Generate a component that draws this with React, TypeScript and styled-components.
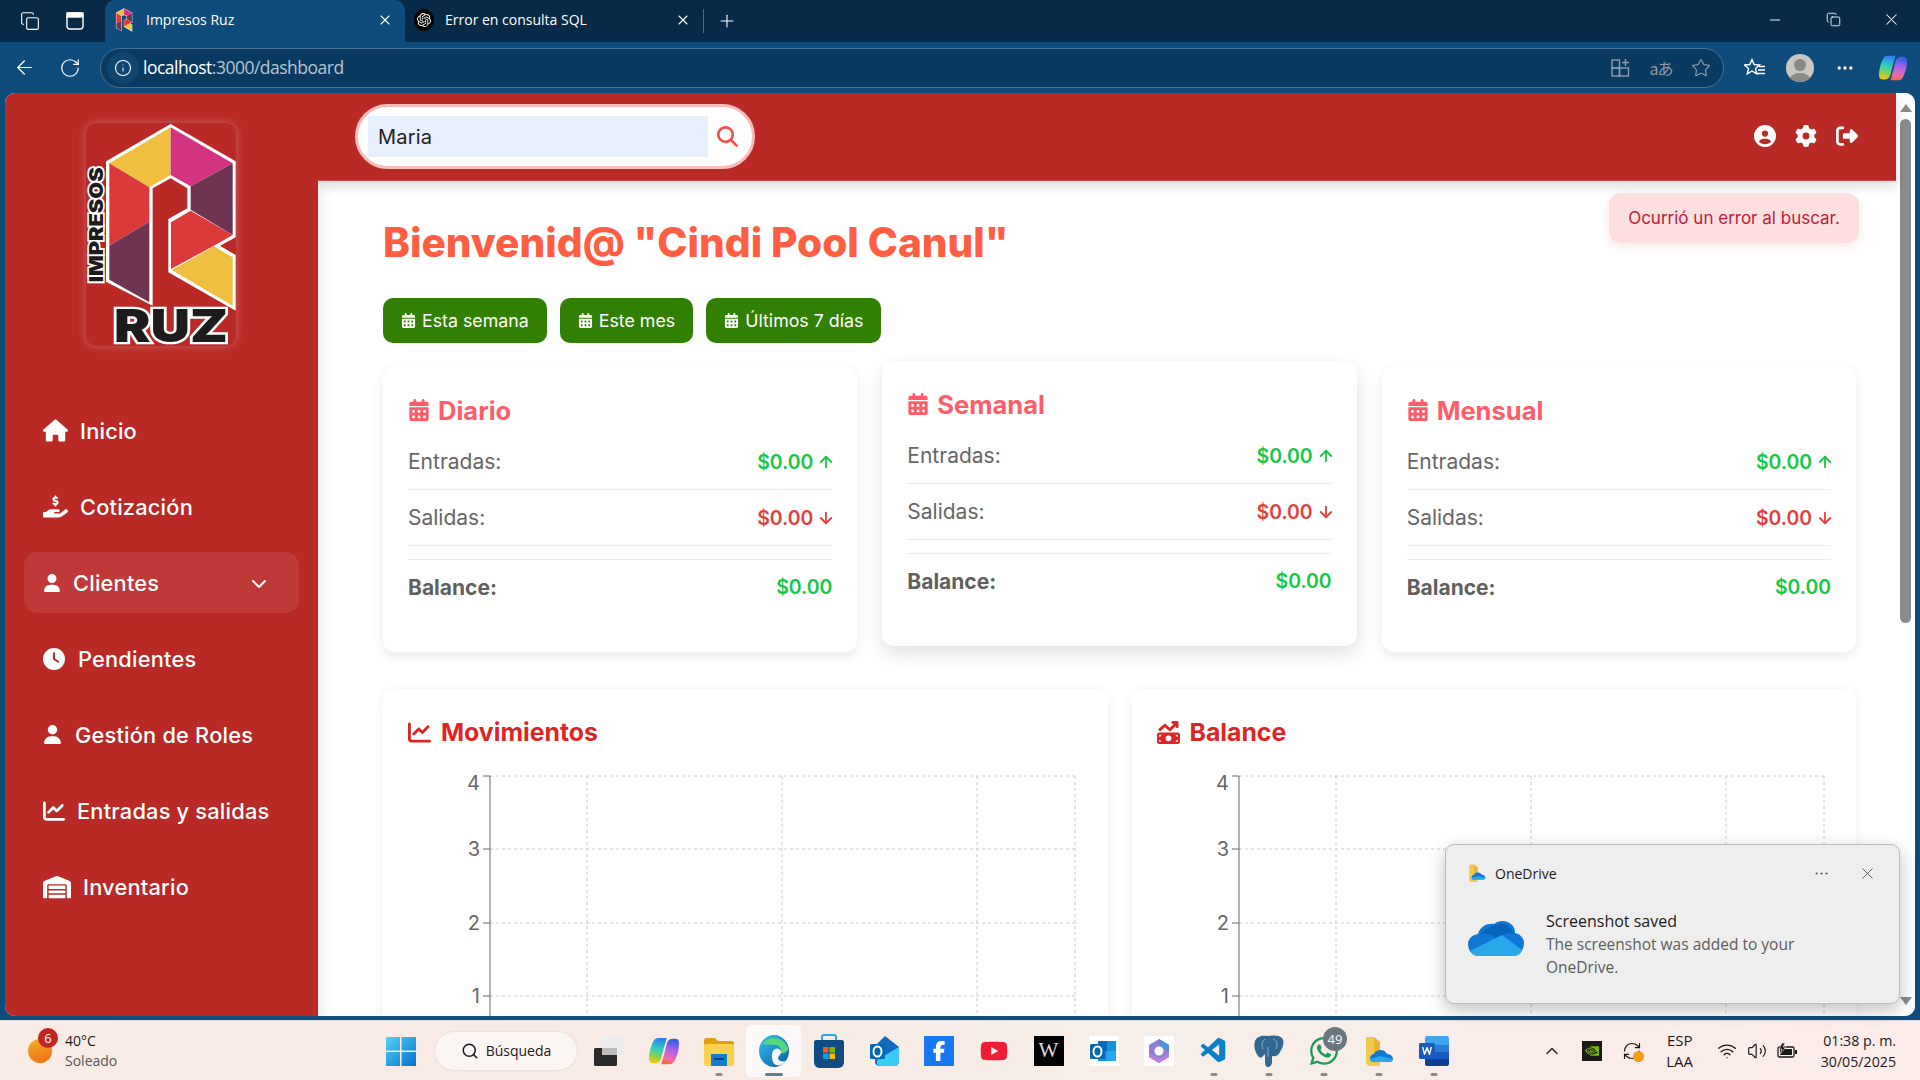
import React from "react";
import styled, { createGlobalStyle } from "styled-components";
import {
  FaHouse,
  FaHandHoldingDollar,
  FaUser,
  FaClock,
  FaChartLine,
  FaWarehouse,
  FaChevronDown,
  FaCalendarDays,
  FaCircleUser,
  FaGear,
  FaRightFromBracket,
  FaMagnifyingGlass,
  FaMoneyBillTrendUp,
  FaFacebookF,
  FaYoutube,
  FaWhatsapp,
} from "react-icons/fa6";
import { SiOpenai, SiNvidia } from "react-icons/si";
import { VscVscode } from "react-icons/vsc";
import {
  ArrowLeft,
  ArrowUp,
  ArrowDown,
  RotateCw,
  Info,
  Star,
  Plus,
  X,
  Minus,
  Copy,
  MoreHorizontal,
  Search,
  ChevronUp,
  Wifi,
  Volume2,
  RefreshCw,
} from "lucide-react";

const GlobalStyle = createGlobalStyle`
  html, body {
    margin: 0;
    padding: 0;
    height: 100%;
    overflow: hidden;
    background: #0f4c7c;
  }
  * { box-sizing: border-box; }
`;

const UI_FONT = `"Open Sans", "Noto Sans", sans-serif`;
const PAGE_FONT = `Inter, "Noto Sans", sans-serif`;

const Screen = styled.div`
  position: relative;
  width: 1920px;
  height: 1080px;
  display: flex;
  flex-direction: column;
  overflow: hidden;
  background: #0f4c7c;
  font-family: ${PAGE_FONT};
`;

/* browser chrome */
const TabStrip = styled.div`
  height: 42px;
  flex: none;
  display: flex;
  background: #072a48;
  color: #fff;
  font-family: ${UI_FONT};
`;

const StripButton = styled.div`
  width: 45px;
  display: flex;
  align-items: center;
  justify-content: center;
  flex: none;
`;

const StripLeft = styled.div`
  display: flex;
  width: 105px;
  padding-left: 7px;
  flex: none;
`;

const Tab = styled.div<{ $active?: boolean }>`
  width: ${(p) => (p.$active ? "300px" : "298px")};
  display: flex;
  align-items: center;
  gap: 11px;
  padding: 0 12px 3px 8px;
  border-radius: 10px 10px 0 0;
  background: ${(p) => (p.$active ? "#0f4c7c" : "transparent")};
  font-size: 14px;
  flex: none;
`;

const TabTitle = styled.span`
  flex: 1;
  white-space: nowrap;
`;

const TabDivider = styled.div`
  width: 1px;
  height: 24px;
  margin-top: 9px;
  background: #4c6a83;
  flex: none;
`;

const WindowControls = styled.div`
  margin-left: auto;
  display: flex;
  width: 174px;
  flex: none;
`;

const WindowButton = styled.div`
  width: 58px;
  display: flex;
  align-items: center;
  justify-content: center;
  padding-bottom: 3px;
`;

const Toolbar = styled.div`
  height: 51px;
  flex: none;
  display: flex;
  align-items: center;
  background: #0f4c7c;
  color: #fff;
  font-family: ${UI_FONT};
`;

const ToolButton = styled.div<{ $w?: number }>`
  width: ${(p) => p.$w ?? 45}px;
  display: flex;
  align-items: center;
  justify-content: center;
  flex: none;
`;

const AddressBar = styled.div`
  width: 1624px;
  height: 40px;
  margin-left: 8px;
  padding: 0 2px 0 6px;
  display: flex;
  align-items: center;
  flex: none;
  background: #0a3a60;
  border: 1px solid #4a7291;
  border-radius: 20px;
`;

const SiteInfo = styled.div`
  width: 32px;
  height: 32px;
  margin-right: 4px;
  border-radius: 50%;
  background: #11456e;
  display: flex;
  align-items: center;
  justify-content: center;
  flex: none;
`;

const Url = styled.div`
  flex: 1;
  padding-bottom: 2px;
  font-size: 17.5px;
  letter-spacing: -0.5px;
  color: #fff;
`;

const UrlRest = styled.span`
  color: #b5c5d3;
`;

const AddressIcon = styled.div`
  width: 40px;
  display: flex;
  justify-content: center;
  color: #8d9dab;
`;

const TranslateGlyph = styled.span`
  font-family: "Noto Sans CJK JP", "Noto Sans", sans-serif;
  font-size: 16px;
  letter-spacing: -1px;
`;

const Avatar = styled.div`
  position: relative;
  width: 28px;
  height: 28px;
  border-radius: 50%;
  overflow: hidden;
  background: #c9c7c3;
  display: flex;
  justify-content: center;
`;

const AvatarHead = styled.div`
  width: 12px;
  height: 12px;
  margin-top: 5px;
  border-radius: 50%;
  background: #8b8985;
`;

const AvatarBody = styled.div`
  position: absolute;
  bottom: -7px;
  width: 22px;
  height: 16px;
  border-radius: 50%;
  background: #8b8985;
`;

/* page */
const PageRow = styled.div`
  height: 923px;
  flex: none;
  margin: 0 5px 0 5px;
  display: flex;
  border-radius: 10px;
  overflow: hidden;
  background: #fff;
`;

const Sidebar = styled.aside`
  width: 313px;
  flex: none;
  display: flex;
  flex-direction: column;
  background: #b92926;
  color: #fff;
  padding: 30px 19px 0;
  z-index: 2;
`;

const LogoTile = styled.div`
  width: 150px;
  height: 223px;
  margin-left: 62px;
  border-radius: 10px;
  box-shadow: 0 0 10px rgba(255, 255, 255, 0.28);
  flex: none;
  svg {
    display: block;
    margin-left: -10px;
  }
`;

const Nav = styled.nav`
  margin-top: 54px;
  display: flex;
  flex-direction: column;
  gap: 15px;
`;

const NavItem = styled.div<{ $open?: boolean; $gap: number }>`
  height: 61px;
  display: flex;
  align-items: center;
  gap: ${(p) => p.$gap}px;
  padding: 0 32px 0 19px;
  border-radius: 14px;
  background: ${(p) => (p.$open ? "rgba(255,255,255,0.08)" : "transparent")};
  font-size: 21.8px;
  font-weight: 500;
  letter-spacing: 0.2px;
  svg { flex: none; }
`;

const NavLabel = styled.span`
  flex: 1;
  white-space: nowrap;
`;

const Content = styled.div`
  position: relative;
  flex: 1;
  min-width: 0;
  display: flex;
  flex-direction: column;
  box-shadow: inset 14px 0 14px -12px rgba(0, 0, 0, 0.1);
`;

const TopBar = styled.header`
  height: 88px;
  flex: none;
  display: flex;
  align-items: center;
  justify-content: space-between;
  padding: 0 38px 0 37px;
  background: #b92926;
  border-bottom: 1px solid #cf4a48;
  box-shadow: 0 4px 12px rgba(0, 0, 0, 0.16);
  z-index: 1;
`;

const SearchPill = styled.div`
  width: 400px;
  height: 65px;
  display: flex;
  align-items: center;
  gap: 9px;
  padding: 0 14px 0 10px;
  background: #fff;
  border: 3px solid #f8bdbb;
  border-radius: 33px;
`;

const SearchInput = styled.div`
  flex: 1;
  height: 41px;
  padding: 0 10px;
  display: flex;
  align-items: center;
  background: #e8f0fe;
  color: #222;
  font-size: 20px;
  letter-spacing: 0.2px;
`;

const TopIcons = styled.div`
  display: flex;
  align-items: center;
  gap: 19px;
  padding-bottom: 2px;
  color: #fff;
  font-size: 22px;
`;

const Toast = styled.div`
  position: absolute;
  top: 100px;
  right: 37px;
  width: 250px;
  height: 50px;
  display: flex;
  align-items: center;
  justify-content: center;
  border-radius: 12px;
  background: #fddfe0;
  color: #b91c3c;
  font-size: 17px;
  box-shadow: 0 4px 12px rgba(220, 38, 38, 0.1);
  z-index: 3;
`;

const Main = styled.main`
  flex: 1;
  min-height: 0;
  overflow: hidden;
  padding: 34px 40px 0 65px;
`;

const Title = styled.h1`
  margin: 0;
  height: 56px;
  line-height: 56px;
  font-size: 40.6px;
  font-weight: 800;
  color: #ff5e42;
  white-space: nowrap;
`;

const Filters = styled.div`
  margin-top: 27px;
  display: flex;
  gap: 13px;
`;

const FilterButton = styled.div`
  height: 45px;
  padding: 0 18px;
  display: flex;
  align-items: center;
  gap: 6px;
  border-radius: 10px;
  background: #317f03;
  color: #fff;
  font-size: 17.8px;
`;

const Summary = styled.div`
  margin-top: 24px;
  display: grid;
  grid-template-columns: repeat(3, 1fr);
  gap: 25px;
`;

const Card = styled.section<{ $raised?: boolean }>`
  height: 285px;
  padding: 23px 25px 0;
  border-radius: 12px;
  background: #fff;
  transform: ${(p) => (p.$raised ? "translateY(-6px)" : "none")};
  box-shadow: ${(p) =>
    p.$raised ? "0 8px 22px rgba(0,0,0,0.12)" : "0 4px 14px rgba(0,0,0,0.09)"};
`;

const CardTitle = styled.h3`
  margin: 0;
  height: 44px;
  padding-bottom: 4px;
  display: flex;
  align-items: center;
  gap: 8px;
  font-size: 25.5px;
  font-weight: 700;
  color: #ff5c6a;
`;

const Row = styled.div`
  height: 56px;
  display: flex;
  align-items: center;
  justify-content: space-between;
  border-bottom: 1px solid #ececec;
  font-size: 21px;
  color: #666;
`;

const BalanceRow = styled.div`
  margin-top: 13px;
  height: 55px;
  display: flex;
  align-items: center;
  justify-content: space-between;
  border-top: 1px solid #ececec;
  font-size: 21px;
  font-weight: 700;
  color: #5f5f5f;
`;

const Amount = styled.span<{ $tone: "in" | "out" }>`
  display: flex;
  align-items: center;
  gap: 4px;
  font-size: 19.4px;
  font-weight: 600;
  color: ${(p) => (p.$tone === "in" ? "#14c944" : "#e53e3e")};
  svg { margin-right: -3px; }
`;

const Charts = styled.div`
  margin-top: 37px;
  display: grid;
  grid-template-columns: 1fr 1fr;
  gap: 24px;
`;

const ChartCard = styled.section`
  height: 420px;
  padding-top: 26px;
  border-radius: 12px;
  background: #fff;
  box-shadow: 0 2px 14px rgba(0, 0, 0, 0.07);
`;

const ChartTitle = styled.h3`
  margin: 0 0 0 25px;
  height: 34px;
  display: flex;
  align-items: center;
  gap: 10px;
  font-size: 24.8px;
  font-weight: 700;
  color: #dc2626;
`;

const ChartSvg = styled.svg`
  display: block;
  margin-top: 18px;
`;

const ScrollTrack = styled.div`
  width: 19px;
  flex: none;
  display: flex;
  flex-direction: column;
  align-items: center;
  background: #fff;
  padding-top: 11px;
`;

const ScrollThumb = styled.div`
  width: 11px;
  height: 504px;
  margin-top: 7px;
  border-radius: 6px;
  background: #8b8b8b;
`;

const ScrollArrow = styled.div<{ $down?: boolean }>`
  width: 0;
  height: 0;
  border-left: 6px solid transparent;
  border-right: 6px solid transparent;
  border-bottom: ${(p) => (p.$down ? "0" : "8px solid #8b8b8b")};
  border-top: ${(p) => (p.$down ? "8px solid #8b8b8b" : "0")};
  margin-top: ${(p) => (p.$down ? "auto" : "0")};
  margin-bottom: ${(p) => (p.$down ? "11px" : "0")};
`;

/* windows shell */
const Taskbar = styled.footer`
  margin-top: 4px;
  height: 60px;
  flex: none;
  display: flex;
  align-items: center;
  background: linear-gradient(90deg, #f9ece7 0%, #f8ebe6 40%, #f6eee8 60%, #fcecea 100%);
  border-top: 1px solid #d9dee2;
  font-family: ${UI_FONT};
  color: #1a1a1a;
`;

const Weather = styled.div`
  position: relative;
  width: 373px;
  flex: none;
  padding-left: 65px;
  font-size: 14px;
  line-height: 20px;
`;

const WeatherSub = styled.div`
  color: #555;
`;

const Sun = styled.div`
  position: absolute;
  left: 28px;
  top: 8px;
  width: 24px;
  height: 24px;
  border-radius: 50%;
  background: linear-gradient(160deg, #f4b02c, #ee6a12);
`;

const WeatherBadge = styled.div`
  position: absolute;
  left: 38px;
  top: -3px;
  width: 20px;
  height: 20px;
  border-radius: 50%;
  background: #c0281f;
  color: #fff;
  font-size: 13px;
  display: flex;
  align-items: center;
  justify-content: center;
`;

const TaskIcons = styled.div`
  display: flex;
  align-items: center;
`;

const TaskCell = styled.div<{ $active?: boolean }>`
  position: relative;
  width: 55px;
  height: 52px;
  flex: none;
  display: flex;
  align-items: center;
  justify-content: center;
  border-radius: 5px;
  background: ${(p) => (p.$active ? "rgba(255,255,255,0.7)" : "transparent")};
`;

const RunPip = styled.div<{ $active?: boolean }>`
  position: absolute;
  bottom: 1px;
  left: 50%;
  transform: translateX(-50%);
  width: ${(p) => (p.$active ? "18px" : "7px")};
  height: 3px;
  border-radius: 2px;
  background: ${(p) => (p.$active ? "#5f7f92" : "#8a8a8a")};
`;

const CountBadge = styled.div`
  position: absolute;
  top: 2px;
  right: 4px;
  width: 24px;
  height: 24px;
  border-radius: 50%;
  background: #6b7780;
  color: #fff;
  font-size: 13px;
  display: flex;
  align-items: center;
  justify-content: center;
`;

const TaskSearch = styled.div`
  width: 142px;
  height: 38px;
  margin: 0 4px 0 7px;
  flex: none;
  display: flex;
  align-items: center;
  justify-content: center;
  gap: 7px;
  border-radius: 19px;
  background: #fbf6f3;
  box-shadow: 0 0 2px rgba(0, 0, 0, 0.15);
  font-size: 14px;
`;

const Tile = styled.div<{ $bg: string; $size?: number }>`
  width: ${(p) => p.$size ?? 30}px;
  height: ${(p) => p.$size ?? 30}px;
  display: flex;
  align-items: center;
  justify-content: center;
  background: ${(p) => p.$bg};
  color: #fff;
  font-size: 20px;
`;

const WikiLetter = styled.span`
  font-family: "Liberation Serif", serif;
  font-size: 21px;
  color: #ddd;
`;

const Tray = styled.div`
  position: absolute;
  right: 24px;
  display: flex;
  align-items: center;
`;

const TraySlot = styled.div<{ $w: number }>`
  width: ${(p) => p.$w}px;
  display: flex;
  justify-content: center;
  flex: none;
`;

const Lang = styled.div`
  width: 58px;
  margin: 0 3px 0 4px;
  text-align: center;
  font-size: 15px;
  line-height: 21px;
`;

const Clock = styled.div`
  margin-left: 19px;
  text-align: right;
  font-size: 14.2px;
  line-height: 21px;
  white-space: nowrap;
`;

const SyncWrap = styled.div`
  position: relative;
  display: flex;
`;

const SyncDot = styled.div`
  position: absolute;
  right: -2px;
  bottom: -1px;
  width: 11px;
  height: 11px;
  border-radius: 50%;
  background: #f99b13;
`;

const Notification = styled.div`
  position: absolute;
  left: 1445px;
  top: 844px;
  width: 455px;
  height: 160px;
  padding: 17px 22px 0;
  border-radius: 9px;
  background: #eeeeee;
  border: 1px solid #bcbcbc;
  box-shadow: 0 6px 18px rgba(0, 0, 0, 0.25);
  font-family: ${UI_FONT};
  z-index: 5;
`;

const NoticeHead = styled.div`
  height: 22px;
  display: flex;
  align-items: center;
  gap: 9px;
  font-size: 14px;
  color: #1b1b1b;
`;

const NoticeTools = styled.div`
  margin-left: auto;
  display: flex;
  align-items: center;
  gap: 28px;
  color: #555;
`;

const NoticeBody = styled.div`
  margin-top: 26px;
  display: flex;
  gap: 22px;
  svg { margin-top: 10px; flex: none; }
`;

const NoticeTitle = styled.div`
  font-size: 16px;
  line-height: 23px;
  color: #1b1b1b;
`;

const NoticeText = styled.div`
  font-size: 15.5px;
  line-height: 23px;
  color: #5c5c5c;
  width: 300px;
`;

/* drawings */
const LogoShapes = () => (
  <>
    <polygon
      fill="#fff"
      points="302,45 497,157 497,385 450,410 497,438 497,605 295,490 295,330 352,298 352,238 302,208 248,238 248,590 108,518 108,157"
    />
    <polygon fill="#efc040" points="118,163 302,55 302,198 238,235" />
    <polygon fill="#d23482" points="302,55 488,163 362,232 302,198" />
    <polygon fill="#703453" points="488,163 362,232 362,302 488,378" />
    <polygon fill="#dc3a3a" points="303,340 362,305 488,378 432,410 303,480" />
    <polygon fill="#efc040" points="432,412 488,445 488,590 305,483" />
    <polygon fill="#dc3a3a" points="118,163 238,235 238,338 118,410" />
    <polygon fill="#703453" points="118,410 238,338 238,580 118,512" />
  </>
);

const Logo = () => (
  <svg width="160" height="240" viewBox="18 42 480 720">
    <LogoShapes />
    <text
      transform="translate(98,520) rotate(-90)"
      fontFamily="Inter, sans-serif"
      fontWeight="900"
      fontSize="56"
      textLength="345"
      lengthAdjust="spacingAndGlyphs"
      fill="#1d1b1c"
      stroke="#fff"
      strokeWidth="10"
      paintOrder="stroke"
    >
      IMPRESOS
    </text>
    <text
      x="132"
      y="698"
      fontFamily="Inter, sans-serif"
      fontWeight="900"
      fontSize="138"
      textLength="342"
      lengthAdjust="spacingAndGlyphs"
      fill="#1d1b1c"
      stroke="#fff"
      strokeWidth="14"
      paintOrder="stroke"
    >
      RUZ
    </text>
  </svg>
);

const TabLogo = () => (
  <svg width="22" height="24" viewBox="100 42 400 570">
    <LogoShapes />
  </svg>
);

const ChatBadge = styled.div`
  width: 20px;
  height: 22px;
  margin-left: 1px;
  border-radius: 50%;
  background: #000;
  display: flex;
  align-items: center;
  justify-content: center;
  flex: none;
`;

const CopilotIcon = ({ size, id }: { size: number; id: string }) => (
  <svg width={size} height={size} viewBox="0 0 32 32">
    <defs>
      <linearGradient id={`${id}A`} x1="0.6" y1="0" x2="0.4" y2="1">
        <stop offset="0" stopColor="#2a7ff0" />
        <stop offset="0.45" stopColor="#2fd0c0" />
        <stop offset="0.75" stopColor="#8ad24a" />
        <stop offset="1" stopColor="#f5c518" />
      </linearGradient>
      <linearGradient id={`${id}B`} x1="0.6" y1="0" x2="0.4" y2="1">
        <stop offset="0" stopColor="#2a5fe8" />
        <stop offset="0.45" stopColor="#b160e8" />
        <stop offset="0.8" stopColor="#f26aa8" />
        <stop offset="1" stopColor="#f2683c" />
      </linearGradient>
    </defs>
    <path d="M10 2h9c-1 3-2 7-3 10l-3 12c-1 3-3 5-6 5H4c-3 0-4-2-4-5 0-8 3-16 5-19 1-2 3-3 5-3z" fill={`url(#${id}A)`} />
    <path d="M22 30h-9c1-3 2-7 3-10l3-12c1-3 3-5 6-5h3c3 0 4 2 4 5 0 8-3 16-5 19-1 2-3 3-5 3z" fill={`url(#${id}B)`} />
  </svg>
);

const WindowsIcon = () => (
  <svg width="30" height="30" viewBox="0 0 30 30">
    <defs>
      <linearGradient id="winA" x1="0" y1="0" x2="1" y2="1">
        <stop offset="0" stopColor="#52d0f8" />
        <stop offset="1" stopColor="#0672d0" />
      </linearGradient>
    </defs>
    <path d="M0 1h14v13.500H0zM15.500 1H30v13.500H15.500zM0 16h14v14H0zM15.500 16H30v14H15.500z" fill="url(#winA)" />
  </svg>
);

const TaskViewIcon = () => (
  <svg width="30" height="30" viewBox="0 0 30 30">
    <rect x="0" y="12" width="23" height="18" rx="1.500" fill="#2b2b2b" />
    <rect x="8" y="0" width="22" height="19" rx="1" fill="#ececec" />
    <rect x="8" y="12" width="15" height="7" fill="#bdbdbd" />
  </svg>
);

const ExplorerIcon = () => (
  <svg width="30" height="30" viewBox="0 0 30 30">
    <path d="M0 4c0-1 1-2 2-2h9l3 3h14c1 0 2 1 2 2v3H0z" fill="#dea20f" />
    <rect x="0" y="8" width="30" height="22" rx="2" fill="#f8d24e" />
    <path d="M7 18h16v12H7z" fill="#0f7fd0" />
    <rect x="10" y="22" width="10" height="2" fill="#073f78" />
  </svg>
);

const EdgeIcon = () => (
  <svg width="30" height="32" viewBox="0 0 30 32">
    <defs>
      <linearGradient id="edgeA" x1="0" y1="0" x2="1" y2="1">
        <stop offset="0" stopColor="#35c1f1" />
        <stop offset="1" stopColor="#0c59a4" />
      </linearGradient>
    </defs>
    <ellipse cx="15" cy="16" rx="15" ry="16" fill="url(#edgeA)" />
    <path d="M4 9c4-8 20-9 25 4 0 4-4 6-8 5 2-3 1-7-5-8-5-1-9 0-12-1z" fill="#54d77d" />
    <path d="M14 16c2-4 8-3 8 1 0 3-3 4-3 6 0 3 4 4 8 3-4 5-11 6-13 1-1-4-2-7 0-11z" fill="#f4f8fb" />
  </svg>
);

const StoreIcon = () => (
  <svg width="30" height="34" viewBox="0 0 30 34">
    <path d="M8 6V3c0-1 1-2 2-2h10c1 0 2 1 2 2v3" fill="none" stroke="#2ea7e8" strokeWidth="2" />
    <path d="M0 8c0-1 1-2 2-2h26c1 0 2 1 2 2v20c0 3-2 6-6 6H6c-4 0-6-3-6-6z" fill="#0f4c82" />
    <rect x="9" y="13" width="5.500" height="5.500" fill="#ef5a26" />
    <rect x="15.500" y="13" width="5.500" height="5.500" fill="#7fba00" />
    <rect x="9" y="19.500" width="5.500" height="5.500" fill="#00a4ef" />
    <rect x="15.500" y="19.500" width="5.500" height="5.500" fill="#ffb900" />
  </svg>
);

const OutlookIcon = ({ flat }: { flat?: boolean }) => (
  <svg width="30" height="30" viewBox="0 0 30 30">
    {flat ? (
      <>
        <rect x="9" y="5" width="18" height="20" fill="#1490df" />
        <rect x="9" y="5" width="9" height="10" fill="#0a6cb8" />
        <rect x="18" y="15" width="9" height="10" fill="#28a8ea" />
      </>
    ) : (
      <>
        <path d="M16 0l14 11v15c0 2-2 4-4 4H10c-2 0-4-2-4-4V10z" fill="#0f6cbd" />
        <path d="M8 24l22-13v15c0 2-2 4-4 4H10c-1 0-2-1-2-2z" fill="#3ccbf4" />
      </>
    )}
    <rect x="1" y="8" width="15" height="15" rx="1.500" fill="#0767b5" />
    <ellipse cx="8.500" cy="15.500" rx="4" ry="5" fill="none" stroke="#fff" strokeWidth="2" />
  </svg>
);

const M365Icon = () => (
  <svg width="24" height="24" viewBox="0 0 24 24">
    <path d="M12 0l10 6v12l-10 6-10-6V6z" fill="#8f7fd8" />
    <path d="M12 0l10 6v6l-10-6z" fill="#4b93d8" />
    <path d="M2 14l10 6 10-6v4l-10 6-10-6z" fill="#c17fdc" />
    <circle cx="12" cy="12" r="4.500" fill="#fff" />
  </svg>
);

const PostgresIcon = () => (
  <svg width="30" height="32" viewBox="0 0 30 32">
    <path
      d="M14 1C8 0 3 1 1 6c-2 6 1 13 4 16 1 1 3 1 4-1l2-2v8c0 3 1 5 3 5s4-2 4-5v-6c3 1 6 0 8-4 3-5 5-10 2-14-3-3-8-3-14-2z"
      fill="#336791"
    />
    <path d="M11 4c-3 2-4 6-2 10M19 4c4 1 5 6 3 10M14 12v10" fill="none" stroke="#8fb2cc" strokeWidth="1" />
  </svg>
);

const OneDriveCloud = ({ width, height }: { width: number; height: number }) => (
  <svg width={width} height={height} viewBox="0 0 56 36">
    <path d="M10 14C12 6 20 3 26 4c5-4 13-4 18 1 3 3 3 6 3 8 5 1 9 5 9 10 0 7-5 13-11 13H11C4 36 0 30 0 24c0-5 4-9 10-10z" fill="#0f78d4" />
    <path d="M13 14c5-1 11 0 15 4l6-3c3-1 7-2 11-1C44 7 36 2 28 5c-7 2-13 5-15 9z" fill="#0364b8" />
    <path d="M11 36h34c4 0 8-2 9-6L34 15 2 31c2 3 5 5 9 5z" fill="#28a8ea" />
  </svg>
);

const FolderCloudIcon = ({ size }: { size: number }) => (
  <svg width={size} height={size} viewBox="0 0 30 30">
    <path d="M2 1h8l6 5v24H6c-2 0-4-2-4-4z" fill="#f3c94c" />
    <path d="M10 1l6 5v18H10z" fill="#e6b53a" />
    <path d="M10 26c-3 0-4-2-4-4s2-4 4-4c1-3 4-4 7-4 3 0 5 2 6 4 4 0 6 3 6 5 0 2-2 3-4 3z" fill="#0f78d4" />
    <path d="M6 23l10-3 13 3c0 2-2 3-4 3H10c-2 0-4-1-4-3z" fill="#28a8ea" />
  </svg>
);

const WordIcon = () => (
  <svg width="30" height="30" viewBox="0 0 30 30">
    <path d="M6 2c0-1 1-2 2-2h20c1 0 2 1 2 2v7H6z" fill="#41a5ee" />
    <rect x="6" y="9" width="24" height="7" fill="#2b7cd3" />
    <rect x="6" y="16" width="24" height="7" fill="#185abd" />
    <path d="M6 23h24v5c0 1-1 2-2 2H8c-1 0-2-1-2-2z" fill="#103f91" />
    <rect x="0" y="7" width="16" height="16" rx="1.500" fill="#185abd" />
    <path d="M3 11l2 8h1l2-5 2 5h1l2-8h-1.500l-1 5-2-5h-1l-2 5-1-5z" fill="#fff" />
  </svg>
);

const BatteryIcon = () => (
  <svg width="20" height="16" viewBox="0 0 20 16">
    <rect x="1" y="4" width="16" height="10" rx="1.500" fill="none" stroke="#1a1a1a" strokeWidth="1.300" />
    <rect x="3" y="6" width="12" height="6" fill="#1a1a1a" />
    <rect x="18" y="7" width="2" height="4" fill="#1a1a1a" />
    <path d="M5 0L2 6h3L3 11l6-7H6l2-4z" fill="#1a1a1a" stroke="#fbeee9" strokeWidth="0.600" />
  </svg>
);

const PLOT_ROWS = [
  { label: "4", y: 9 },
  { label: "3", y: 82 },
  { label: "2", y: 156 },
  { label: "1", y: 229 },
];
const PLOT_COLS = [204, 399, 594, 692];

const Plot = () => (
  <ChartSvg width="724" height="330" viewBox="0 0 724 330">
    {PLOT_ROWS.map((r) => (
      <line key={r.y} x1="107" x2="692" y1={r.y} y2={r.y} stroke="#ccc" strokeDasharray="3 3" />
    ))}
    {PLOT_COLS.map((x) => (
      <line key={x} x1={x} x2={x} y1="9" y2="330" stroke="#ccc" strokeDasharray="3 3" />
    ))}
    <line x1="107" x2="107" y1="9" y2="330" stroke="#666" />
    {PLOT_ROWS.map((r, i) => (
      <React.Fragment key={r.label}>
        <line x1="100" x2="107" y1={r.y} y2={r.y} stroke="#666" />
        <text
          x="97"
          y={r.y + (i === 0 ? 14 : 7)}
          textAnchor="end"
          fontFamily="Inter, sans-serif"
          fontSize="20"
          fill="#666"
        >
          {r.label}
        </text>
      </React.Fragment>
    ))}
  </ChartSvg>
);

const NAV = [
  { label: "Inicio", icon: <FaHouse size={25} />, gap: 12 },
  { label: "Cotización", icon: <FaHandHoldingDollar size={25} />, gap: 12 },
  { label: "Clientes", icon: <FaUser size={18} />, gap: 12, open: true },
  { label: "Pendientes", icon: <FaClock size={22} />, gap: 13 },
  { label: "Gestión de Roles", icon: <FaUser size={19} />, gap: 13 },
  { label: "Entradas y salidas", icon: <FaChartLine size={22} />, gap: 12 },
  { label: "Inventario", icon: <FaWarehouse size={28} />, gap: 12 },
];

const FILTERS = ["Esta semana", "Este mes", "Últimos 7 días"];

const SUMMARY = [
  { title: "Diario" },
  { title: "Semanal", raised: true },
  { title: "Mensual" },
];

const TaskItem = ({
  children,
  running,
  active,
  badge,
}: {
  children: React.ReactNode;
  running?: boolean;
  active?: boolean;
  badge?: string;
}) => (
  <TaskCell $active={active}>
    {children}
    {badge && <CountBadge>{badge}</CountBadge>}
    {running && <RunPip $active={active} />}
  </TaskCell>
);

export default function App() {
  return (
    <Screen>
      <GlobalStyle />
      <TabStrip>
        <StripLeft>
          <StripButton>
            <Copy size={20} strokeWidth={1.3} />
          </StripButton>
          <StripButton>
            <svg width="20" height="20" viewBox="0 0 20 20" fill="none" stroke="#fff" strokeWidth="1.400">
              <rect x="2" y="2" width="16" height="16" rx="3" />
              <rect x="2" y="2" width="16" height="4" fill="#fff" />
            </svg>
          </StripButton>
        </StripLeft>
        <Tab $active>
          <TabLogo />
          <TabTitle>Impresos Ruz</TabTitle>
          <X size={16} strokeWidth={1.6} />
        </Tab>
        <Tab>
          <ChatBadge>
            <SiOpenai size={14} color="#fff" />
          </ChatBadge>
          <TabTitle>Error en consulta SQL</TabTitle>
          <X size={16} strokeWidth={1.6} />
        </Tab>
        <TabDivider />
        <StripButton>
          <Plus size={20} strokeWidth={1.3} />
        </StripButton>
        <WindowControls>
          <WindowButton>
            <Minus size={16} strokeWidth={1.4} />
          </WindowButton>
          <WindowButton>
            <Copy size={15} strokeWidth={1.4} />
          </WindowButton>
          <WindowButton>
            <X size={19} strokeWidth={1.3} />
          </WindowButton>
        </WindowControls>
      </TabStrip>

      <Toolbar>
        <ToolButton $w={48}>
          <ArrowLeft size={23} strokeWidth={1.3} />
        </ToolButton>
        <ToolButton $w={44}>
          <RotateCw size={22} strokeWidth={1.3} />
        </ToolButton>
        <AddressBar>
          <SiteInfo>
            <Info size={18} strokeWidth={1.4} />
          </SiteInfo>
          <Url>
            localhost<UrlRest>:3000/dashboard</UrlRest>
          </Url>
          <AddressIcon>
            <svg width="20" height="20" viewBox="0 0 20 20" fill="none" stroke="currentColor" strokeWidth="1.400">
              <rect x="1" y="2" width="7.500" height="8" />
              <rect x="1" y="10" width="7.500" height="8" />
              <rect x="8.500" y="10" width="9" height="8" />
              <path d="M14.500 1v7M11 4.500h7" />
            </svg>
          </AddressIcon>
          <AddressIcon>
            <TranslateGlyph>aあ</TranslateGlyph>
          </AddressIcon>
          <AddressIcon>
            <Star size={20} strokeWidth={1.4} />
          </AddressIcon>
        </AddressBar>
        <ToolButton $w={62}>
          <svg width="22" height="20" viewBox="0 0 22 20" fill="none" stroke="#fff" strokeWidth="1.400">
            <path d="M8 1.500l2.200 5 5.300.5-4 3.500 1.200 5.300L8 13l-4.700 2.800 1.200-5.300-4-3.500 5.300-.5z" />
            <path d="M15 8.500h6M14 12h7M13 15.500h8" />
          </svg>
        </ToolButton>
        <ToolButton $w={28}>
          <Avatar>
            <AvatarHead />
            <AvatarBody />
          </Avatar>
        </ToolButton>
        <ToolButton $w={62}>
          <MoreHorizontal size={20} />
        </ToolButton>
        <ToolButton $w={34}>
          <CopilotIcon size={28} id="cpTool" />
        </ToolButton>
      </Toolbar>

      <PageRow>
        <Sidebar>
          <LogoTile>
            <Logo />
          </LogoTile>
          <Nav>
            {NAV.map((item) => (
              <NavItem key={item.label} $open={item.open} $gap={item.gap}>
                {item.icon}
                <NavLabel>{item.label}</NavLabel>
                {item.open && <FaChevronDown size={16} />}
              </NavItem>
            ))}
          </Nav>
        </Sidebar>

        <Content>
          <TopBar>
            <SearchPill>
              <SearchInput>Maria</SearchInput>
              <FaMagnifyingGlass size={21} color="#f0524f" />
            </SearchPill>
            <TopIcons>
              <FaCircleUser />
              <FaGear />
              <FaRightFromBracket />
            </TopIcons>
          </TopBar>
          <Toast>Ocurrió un error al buscar.</Toast>
          <Main>
            <Title>Bienvenid@ "Cindi Pool Canul"</Title>
            <Filters>
              {FILTERS.map((f) => (
                <FilterButton key={f}>
                  <FaCalendarDays size={15} />
                  {f}
                </FilterButton>
              ))}
            </Filters>
            <Summary>
              {SUMMARY.map((c) => (
                <Card key={c.title} $raised={c.raised}>
                  <CardTitle>
                    <FaCalendarDays size={22} />
                    {c.title}
                  </CardTitle>
                  <Row>
                    Entradas:
                    <Amount $tone="in">
                      $0.00 <ArrowUp size={18} strokeWidth={2.4} />
                    </Amount>
                  </Row>
                  <Row>
                    Salidas:
                    <Amount $tone="out">
                      $0.00 <ArrowDown size={18} strokeWidth={2.4} />
                    </Amount>
                  </Row>
                  <BalanceRow>
                    Balance:
                    <Amount $tone="in">$0.00</Amount>
                  </BalanceRow>
                </Card>
              ))}
            </Summary>
            <Charts>
              <ChartCard>
                <ChartTitle>
                  <FaChartLine size={23} />
                  Movimientos
                </ChartTitle>
                <Plot />
              </ChartCard>
              <ChartCard>
                <ChartTitle>
                  <FaMoneyBillTrendUp size={23} />
                  Balance
                </ChartTitle>
                <Plot />
              </ChartCard>
            </Charts>
          </Main>
        </Content>

        <ScrollTrack>
          <ScrollArrow />
          <ScrollThumb />
          <ScrollArrow $down />
        </ScrollTrack>
      </PageRow>

      <Taskbar>
        <Weather>
          <Sun />
          <WeatherBadge>6</WeatherBadge>
          <div>40°C</div>
          <WeatherSub>Soleado</WeatherSub>
        </Weather>
        <TaskIcons>
          <TaskItem>
            <WindowsIcon />
          </TaskItem>
          <TaskSearch>
            <Search size={18} strokeWidth={2} />
            Búsqueda
          </TaskSearch>
          <TaskItem>
            <TaskViewIcon />
          </TaskItem>
          <TaskItem>
            <CopilotIcon size={30} id="cpTask" />
          </TaskItem>
          <TaskItem running>
            <ExplorerIcon />
          </TaskItem>
          <TaskItem running active>
            <EdgeIcon />
          </TaskItem>
          <TaskItem>
            <StoreIcon />
          </TaskItem>
          <TaskItem>
            <OutlookIcon />
          </TaskItem>
          <TaskItem>
            <Tile $bg="#1877f2">
              <FaFacebookF />
            </Tile>
          </TaskItem>
          <TaskItem>
            <FaYoutube size={28} color="#ee1d34" />
          </TaskItem>
          <TaskItem>
            <Tile $bg="#000">
              <WikiLetter>W</WikiLetter>
            </Tile>
          </TaskItem>
          <TaskItem>
            <Tile $bg="#fff">
              <OutlookIcon flat />
            </Tile>
          </TaskItem>
          <TaskItem>
            <Tile $bg="#fff">
              <M365Icon />
            </Tile>
          </TaskItem>
          <TaskItem running>
            <VscVscode size={30} color="#0f7ec8" />
          </TaskItem>
          <TaskItem running>
            <PostgresIcon />
          </TaskItem>
          <TaskItem running badge="49">
            <FaWhatsapp size={32} color="#1f9a57" />
          </TaskItem>
          <TaskItem running>
            <FolderCloudIcon size={30} />
          </TaskItem>
          <TaskItem running>
            <WordIcon />
          </TaskItem>
        </TaskIcons>
        <Tray>
          <TraySlot $w={30}>
            <ChevronUp size={20} strokeWidth={1.6} />
          </TraySlot>
          <TraySlot $w={50}>
            <Tile $bg="#1a1a1a" $size={20}>
              <SiNvidia size={14} color="#76b900" />
            </Tile>
          </TraySlot>
          <TraySlot $w={30}>
            <SyncWrap>
              <RefreshCw size={20} strokeWidth={1.4} />
              <SyncDot />
            </SyncWrap>
          </TraySlot>
          <Lang>
            ESP
            <br />
            LAA
          </Lang>
          <TraySlot $w={30}>
            <Wifi size={20} strokeWidth={1.6} />
          </TraySlot>
          <TraySlot $w={30}>
            <Volume2 size={20} strokeWidth={1.4} />
          </TraySlot>
          <TraySlot $w={30}>
            <BatteryIcon />
          </TraySlot>
          <Clock>
            01:38 p. m.
            <br />
            30/05/2025
          </Clock>
        </Tray>
      </Taskbar>

      <Notification>
        <NoticeHead>
          <FolderCloudIcon size={18} />
          OneDrive
          <NoticeTools>
            <MoreHorizontal size={17} strokeWidth={1.2} />
            <X size={19} strokeWidth={1.2} />
          </NoticeTools>
        </NoticeHead>
        <NoticeBody>
          <OneDriveCloud width={56} height={36} />
          <div>
            <NoticeTitle>Screenshot saved</NoticeTitle>
            <NoticeText>The screenshot was added to your OneDrive.</NoticeText>
          </div>
        </NoticeBody>
      </Notification>
    </Screen>
  );
}
